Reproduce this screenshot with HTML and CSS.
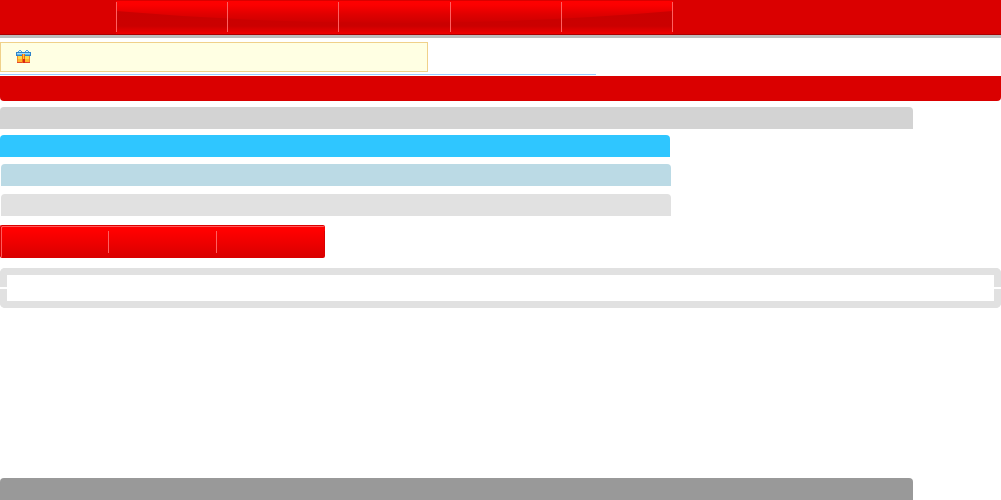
FILE: index.html
```html
<!DOCTYPE html>
<html lang="en">
<head>
<meta charset="utf-8">
<title>Home</title>
<link rel="stylesheet" href="styles.css">
</head>
<body>
<header class="header">
  <nav class="nav">
    <svg class="nav-gloss" viewBox="0 0 557 33" preserveAspectRatio="none" aria-hidden="true">
      <defs>
        <linearGradient id="shine" x1="0" y1="0" x2="0" y2="33" gradientUnits="userSpaceOnUse">
          <stop offset="0" stop-color="#ff0000"/>
          <stop offset=".12" stop-color="#fc0000"/>
          <stop offset=".4" stop-color="#e00000"/>
          <stop offset=".68" stop-color="#cc0000"/>
          <stop offset="1" stop-color="#cc0000"/>
        </linearGradient>
        <linearGradient id="shade" x1="0" y1="0" x2="0" y2="33" gradientUnits="userSpaceOnUse">
          <stop offset="0" stop-color="#ca0000"/>
          <stop offset=".76" stop-color="#cb0000"/>
          <stop offset="1" stop-color="#f00000"/>
        </linearGradient>
      </defs>
      <path fill="url(#shine)" d="M0 0H557V33H0Z"/>
      <path fill="url(#shade)" d="M0 10Q278 34 557 10V33H0Z"/>
    </svg>
    <ul class="nav-list"><li></li><li></li><li></li><li></li><li></li></ul>
  </nav>
</header>
<main class="content">
  <div class="notice">
    <svg class="gift" viewBox="0 0 15 14" aria-hidden="true">
      <path fill="#4fa6e0" d="M3 0H5V1H6V2H2V1H3ZM10 0H12V1H13V2H9V1H10Z"/>
      <path fill="#d8f0fc" d="M3 1H5V2H3ZM10 1H12V2H10Z"/>
      <path fill="#ffd94a" d="M1 5H14V13H1Z"/>
      <path fill="#ffb52e" d="M2 9H6V12H2ZM9 9H13V12H9Z"/>
      <path fill="#f08a2b" d="M1 6H2V12H1ZM13 6H14V12H13Z"/>
      <path fill="#e8482b" d="M1 12H14V13H1Z"/>
      <path fill="#2f83cb" d="M0 2H15V6H0Z"/>
      <path fill="#9edcfa" d="M1 3H14V4H1Z"/>
      <path fill="#64b7e9" d="M1 4H14V5H1Z"/>
      <path fill="#ef6a12" d="M6 4H9V13H6Z"/>
      <path fill="#ffc83c" d="M7 4H8V9H7Z"/>
      <path fill="#d92813" d="M7 9H9V13H7Z"/>
    </svg>
  </div>
  <div class="rule"></div>
  <div class="banner"></div>
  <div class="bars">
    <div class="bar bar-wide"></div>
    <div class="bar bar-sky"></div>
    <div class="bar bar-pale"></div>
    <div class="bar bar-light"></div>
  </div>
  <ul class="tabs"><li></li><li></li><li></li></ul>
  <section class="panel">
    <div class="panel-top"></div>
    <div class="panel-bottom"></div>
  </section>
</main>
<footer class="bar footer"></footer>
</body>
</html>
```
FILE: styles.css
```css
* {
  box-sizing: border-box;
}

body {
  display: flex;
  flex-direction: column;
  min-height: 100vh;
  margin: 0;
  background: #fff;
  font-family: "Liberation Sans", sans-serif;
}

.header {
  padding: 1px 0 0 116px;
  background: linear-gradient(to top, #bdbdbd 3px, #aa0000 3px, #aa0000 4px, #da0000 4px);
}

.nav {
  display: grid;
  max-width: 557px;
  height: 37px;
  padding-bottom: 4px;
}

.nav-gloss,
.nav-list {
  grid-area: 1 / 1;
  width: 100%;
  height: 33px;
}

.nav-list {
  display: flex;
  margin: 0;
  padding: 1px 0 2px;
  list-style: none;
}

.nav-list li {
  flex: 1;
  border-left: 1px solid #ff6060;
}

.nav-list li:last-child {
  border-right: 1px solid #ff6060;
}

.content {
  padding-top: 4px;
}

.notice {
  display: flex;
  align-items: center;
  max-width: 428px;
  height: 30px;
  padding-left: 15px;
  border: 1px solid #f0d18a;
  background: #ffffe3;
}

.gift {
  width: 15px;
  height: 14px;
}

.rule {
  max-width: 596px;
  height: 1px;
  margin: 2px 0 1px;
  background: #99ccff;
}

.banner {
  height: 25px;
  border-radius: 0 0 4px 4px;
  background: #da0000;
}

.bars {
  display: flex;
  flex-direction: column;
  padding: 6px 0 9px;
}

.bar {
  width: 100%;
  height: 22px;
  border-radius: 4px 4px 0 0;
}

.bar-wide {
  max-width: 913px;
  background: #d3d3d3;
}

.bar-sky {
  max-width: 670px;
  margin-top: 6px;
  background: #2fc6ff;
}

.bar-pale {
  max-width: 670px;
  margin: 7px 0 0 1px;
  background: #bbdae5;
}

.bar-light {
  max-width: 670px;
  margin: 8px 0 0 1px;
  background: #e1e1e1;
}

.tabs {
  display: flex;
  max-width: 325px;
  height: 33px;
  margin: 0;
  padding: 5px 0;
  border: solid #da0000;
  border-width: 1px 0 0 1px;
  border-radius: 2px;
  background: linear-gradient(#ff0000 15%, #d80000);
  box-shadow: inset 1px 1px #ff5a5a;
  list-style: none;
}

.tabs li {
  flex: 1;
  border-right: 1px solid #ff6060;
}

.tabs li:last-child {
  border-right-color: #da0000;
}

.panel {
  display: flex;
  flex-direction: column;
  gap: 2px;
  margin: 10px 0;
}

.panel-top,
.panel-bottom {
  height: 19px;
  border: 7px solid #e1e1e1;
}

.panel-top {
  border-bottom: 0;
  border-radius: 5px 5px 0 0;
}

.panel-bottom {
  border-top: 0;
  border-radius: 0 0 5px 5px;
}

.footer {
  max-width: 913px;
  margin-top: auto;
  background: #999;
}
```
